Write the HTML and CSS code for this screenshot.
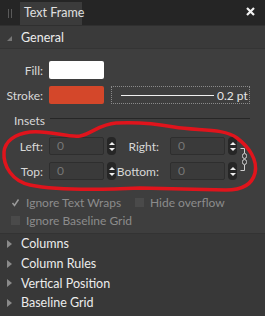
FILE: index.html
```html
<!DOCTYPE html>
<html>
<head>
<meta charset="utf-8">
<link rel="stylesheet" href="styles.css">
</head>
<body>
<div class="panel">
  <div class="titlebar">
    <div class="grip"><span></span><span></span></div>
    <div class="tab">Text Frame</div>
    <div class="close">
      <svg width="9" height="9" viewBox="0 0 9 9"><path d="M1 1 L8 8 M8 1 L1 8" stroke="#f2f2f2" stroke-width="2.2"/></svg>
    </div>
  </div>

  <div class="sec-head open"><span class="tri-open"></span>General</div>
  <div class="general">
    <div class="row fill-row">
      <span class="lbl">Fill:</span>
      <span class="swatch white"></span>
    </div>
    <div class="row stroke-row">
      <span class="lbl">Stroke:</span>
      <span class="swatch red"></span>
      <div class="strokebox"><span class="line"></span><span class="val">0.2 pt</span></div>
    </div>
    <div class="group-title"><span>Insets</span><span class="rule"></span></div>
    <div class="insets">
      <div class="grid">
        <span class="lbl">Left:</span>
        <span class="inp">0</span>
        <span class="spin"><i class="up"></i><i class="dn"></i></span>
        <span class="lbl">Right:</span>
        <span class="inp">0</span>
        <span class="spin"><i class="up"></i><i class="dn"></i></span>
        <span class="lbl">Top:</span>
        <span class="inp">0</span>
        <span class="spin"><i class="up"></i><i class="dn"></i></span>
        <span class="lbl">Bottom:</span>
        <span class="inp">0</span>
        <span class="spin"><i class="up"></i><i class="dn"></i></span>
      </div>
      <svg class="chain" width="9" height="23" viewBox="0 0 9 23">
        <path d="M0.5 0.5 H4.5 V5" stroke="#cfcfcf" fill="none"/>
        <rect x="2.5" y="5.5" width="4" height="5" rx="2" stroke="#cfcfcf" fill="none"/>
        <rect x="2.5" y="11.5" width="4" height="5" rx="2" stroke="#cfcfcf" fill="none"/>
        <path d="M4.5 17 V22.5 H0.5" stroke="#cfcfcf" fill="none"/>
      </svg>
    </div>
    <div class="checks">
      <div class="ck-row">
        <label class="ck first"><span class="box checked"><svg width="9" height="9" viewBox="0 0 9 9"><path d="M1.5 5 L3.5 7.5 L7.5 1.5" stroke="#9a9a9a" stroke-width="1.5" fill="none"/></svg></span>Ignore Text Wraps</label>
        <label class="ck"><span class="box"></span>Hide overflow</label>
      </div>
      <div class="ck-row">
        <label class="ck"><span class="box"></span>Ignore Baseline Grid</label>
      </div>
    </div>
  </div>

  <div class="collapsed">
    <div class="sec-head"><span class="tri"></span>Columns</div>
    <div class="sec-head"><span class="tri"></span>Column Rules</div>
    <div class="sec-head"><span class="tri"></span>Vertical Position</div>
    <div class="sec-head"><span class="tri"></span>Baseline Grid</div>
  </div>

  <svg class="annot" width="265" height="316" viewBox="0 0 265 316">
    <path d="M4 152 C5 141 15 134 30 132 C50 130 68 138 80 136 C93 133 100 124 116 123 C136 122 158 124 174 127 C198 131 224 128 237 138 C249 147 258 160 255 173 C252 185 241 190 226 190 L140 188 C100 190 60 191 30 185 C12 181 3 166 4 152 Z" stroke="#e0141c" stroke-width="3.5" fill="none" stroke-linejoin="round"/>
  </svg>
</div>
</body>
</html>
```

FILE: styles.css
```css
* { box-sizing: border-box; }
html, body { margin: 0; padding: 0; background: #2b2b2b; }
body { font-family: Lato, "Noto Sans", sans-serif; color: #d8d8d8; }

.panel {
  position: relative;
  width: 265px;
  height: 316px;
  background: #3e3e3e;
  overflow: hidden;
}

.titlebar {
  height: 26px;
  background: #252525;
  display: flex;
  align-items: flex-end;
  border-bottom: 1px solid #2f2f2f;
}
.grip {
  width: 20px;
  height: 23px;
  display: flex;
  justify-content: center;
  align-items: center;
  gap: 2px;
}
.grip span { width: 1px; height: 9px; background: #5a5a5a; }
.tab {
  width: 62px;
  height: 23px;
  background: #3b3b3b;
  font-size: 12.5px;
  line-height: 22px;
  padding-left: 4px;
  color: #e0e0e0;
  white-space: nowrap;
}
.close {
  margin-left: auto;
  width: 26px;
  height: 26px;
  display: flex;
  align-items: center;
  justify-content: center;
  padding-right: 4px;
  padding-bottom: 1px;
}

.sec-head {
  display: flex;
  align-items: center;
  font-size: 12.5px;
  color: #ececec;
  padding-left: 7px;
  white-space: nowrap;
}
.sec-head.open {
  background: #3a3a3a;
  height: 23px;
  border-bottom: 1px solid #343434;
}
.tri-open {
  width: 0; height: 0;
  border-left: 5px solid transparent;
  border-bottom: 5px solid #777;
  margin-right: 9px;
  margin-top: 3px;
}
.tri {
  width: 0; height: 0;
  border-top: 4px solid transparent;
  border-bottom: 4px solid transparent;
  border-left: 5px solid #8a8a8a;
  margin-right: 9px;
}

.general { padding-top: 12px; }
.row { display: flex; align-items: center; height: 18px; }
.fill-row { margin-bottom: 7px; }
.lbl {
  width: 49px;
  padding-right: 6px;
  text-align: right;
  font-size: 12px;
  color: #d8d8d8;
  white-space: nowrap;
}
.swatch { width: 55px; height: 18px; border-radius: 2px; }
.swatch.white { background: #ffffff; }
.swatch.red { background: #d4472a; }
.strokebox {
  margin-left: 7px;
  width: 139px;
  height: 18px;
  border: 1px dotted #8a8a8a;
  display: flex;
  align-items: center;
  padding-left: 9px;
  white-space: nowrap;
}
.strokebox .line { width: 93px; height: 1px; background: #f0f0f0; flex: none; }
.strokebox .val { font-size: 12px; margin-left: 3px; color: #e6e6e6; }

.group-title {
  display: flex;
  align-items: center;
  margin-top: 8px;
  padding-left: 14px;
  padding-right: 15px;
  height: 16px;
  font-size: 12px;
  color: #d8d8d8;
}
.group-title .rule { flex: 1; height: 1px; background: #262626; margin-left: 5px; margin-top: -3px; }

.insets {
  display: flex;
  align-items: flex-start;
  margin-top: 9px;
}
.grid {
  display: grid;
  grid-template-columns: 49px 55px 12px 54px 55px 12px;
  grid-auto-rows: 18px;
  row-gap: 7px;
  align-items: center;
}
.inp {
  height: 18px;
  border: 1px solid #2e2e2e;
  background: #3a3a3a;
  border-radius: 2px;
  font-size: 12px;
  color: #767676;
  padding-left: 7px;
  line-height: 16px;
}
.spin {
  width: 9px;
  height: 18px;
  margin-left: 3px;
  background: #262626;
  border-radius: 4px;
  display: flex;
  flex-direction: column;
  align-items: center;
  justify-content: center;
  gap: 3px;
}
.spin i { display: block; width: 0; height: 0; border-left: 3px solid transparent; border-right: 3px solid transparent; }
.spin .up { border-bottom: 3px solid #eee; }
.spin .dn { border-top: 3px solid #eee; }
.chain { margin-left: 3px; margin-top: 11px; }

.checks { padding-left: 11px; margin-top: 13px; padding-bottom: 4px; }
.ck-row { display: flex; height: 18px; align-items: center; }
.ck {
  display: flex;
  align-items: center;
  font-size: 12px;
  color: #8c8c8c;
  white-space: nowrap;
}
.ck.first { width: 124px; }
.box {
  width: 9px;
  height: 9px;
  background: #4a4a4a;
  margin-right: 6px;
  display: flex;
  align-items: center;
  justify-content: center;
}
.box.checked { background: transparent; }

.collapsed {
  background: #383838;
  border-top: 1px solid #333;
  height: 83px;
}
.collapsed .sec-head { height: 19.7px; }

.annot { position: absolute; left: 0; top: 0; pointer-events: none; }
```
